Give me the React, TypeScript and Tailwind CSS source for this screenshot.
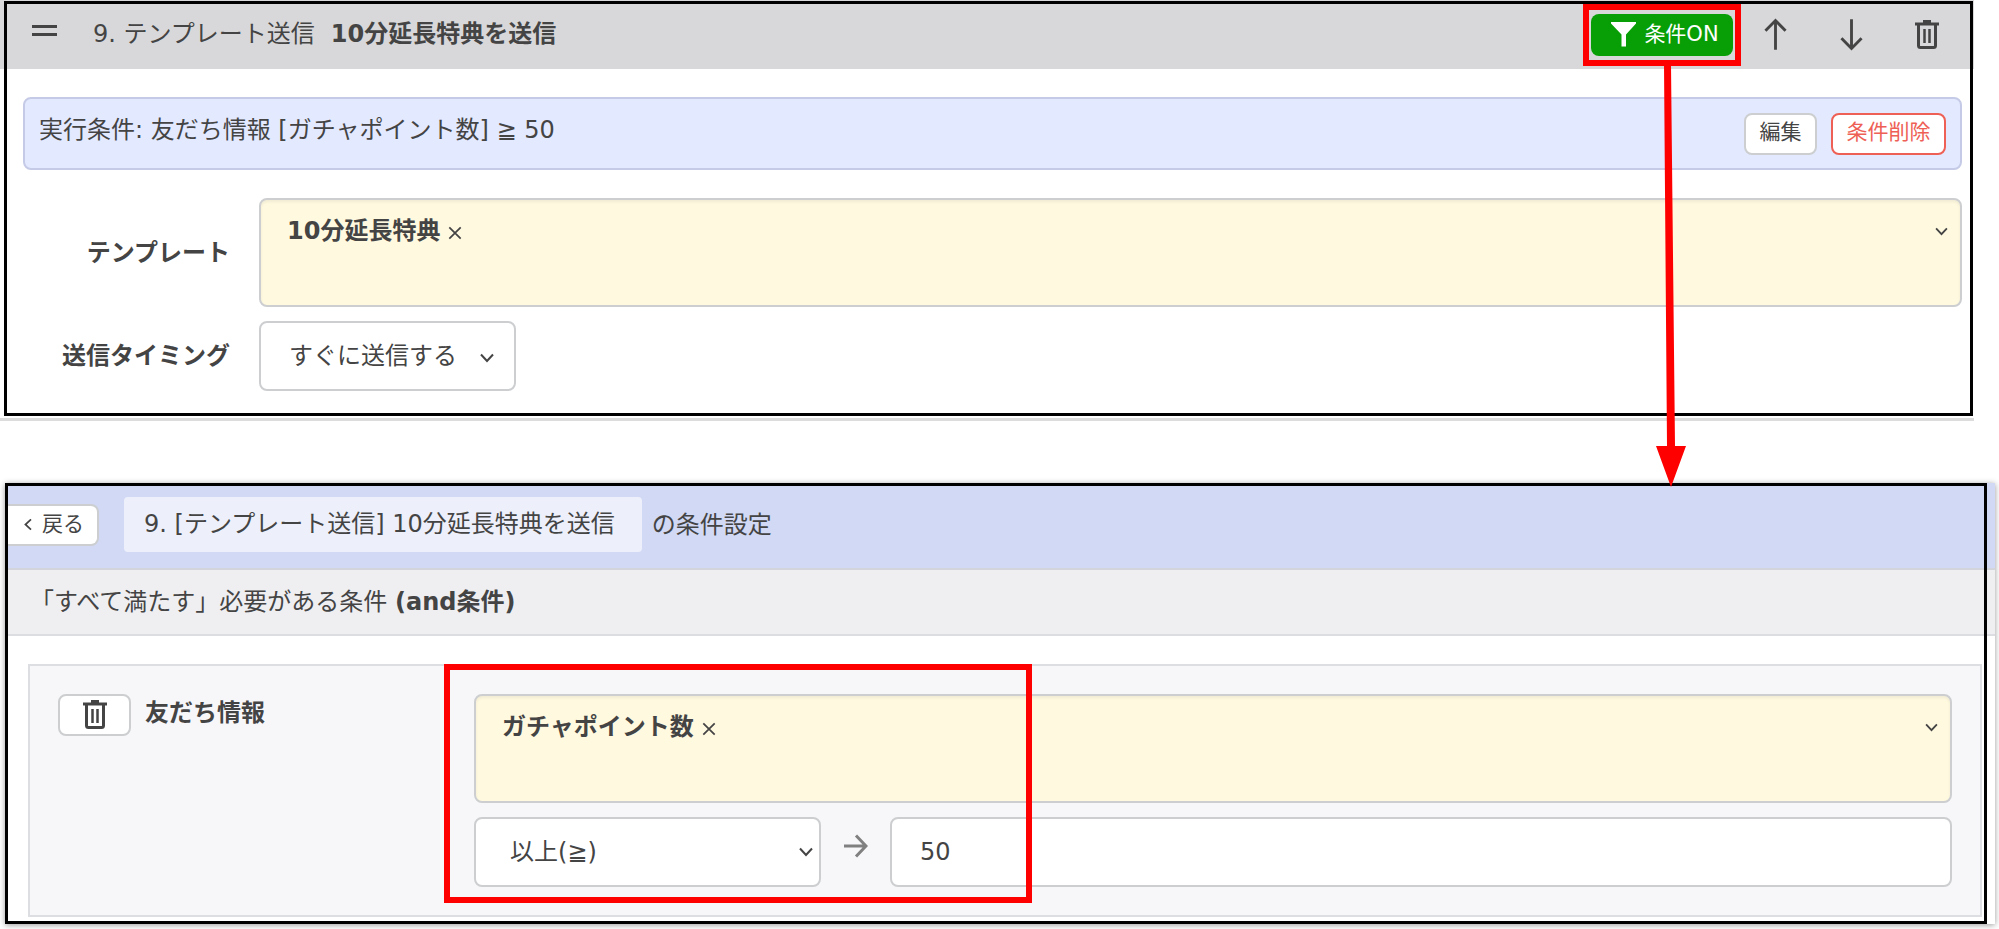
const ArrowIcon = ({ className }: { className?: string }) => (
  <svg viewBox="0 0 24 34" fill="none" stroke="currentColor" strokeWidth="3" className={className}>
    <path d="M12 33V3M1.500 13 12 2.500 22.500 13" />
  </svg>
)

const ArrowRightIcon = ({ className }: { className?: string }) => (
  <svg viewBox="0 0 24 24" fill="none" stroke="currentColor" strokeWidth="3" className={className}>
    <path d="M0 12h22M12 1.500 22 12 12 22.500" />
  </svg>
)

const TrashIcon = ({ className }: { className?: string }) => (
  <svg viewBox="0 0 24 30" fill="none" stroke="currentColor" className={className}>
    <path d="M0 4h24" strokeWidth="3" />
    <path d="M8 1.500h8" strokeWidth="3" />
    <path d="M3.500 5v20.500a2 2 0 0 0 2 2h13a2 2 0 0 0 2-2V5" strokeWidth="3" />
    <path d="M9.500 9v14M14.500 9v14" strokeWidth="2.500" />
  </svg>
)

const FilterIcon = ({ className }: { className?: string }) => (
  <svg viewBox="0 0 25 25" fill="currentColor" className={className}>
    <path d="M0 0h25v1.500L15 12.500v12h-4.500v-12L0 1.500Z" />
  </svg>
)

const ChevronIcon = ({ className }: { className?: string }) => (
  <svg viewBox="0 0 14 10" fill="none" stroke="currentColor" strokeWidth="2" className={className}>
    <path d="M1 1.500 7 8l6-6.500" />
  </svg>
)

// black outline drawn over a panel
const Frame = ({ className }: { className: string }) => (
  <div className={`pointer-events-none absolute border-3 border-black ${className}`} />
)

const TagSelect = ({ label, value }: { label: string; value: string }) => (
  <div
    role="group"
    aria-label={label}
    className="flex h-[109px] min-w-0 items-start justify-between rounded-lg border-2 border-[#ccced0] bg-[#fff9e0] pt-[19px] pr-3 pl-[26px] shadow-[inset_0_2px_3px_rgba(0,0,0,0.06)]"
  >
    <div className="flex items-center gap-2 leading-6">
      <strong>{value}</strong>
      <button type="button" aria-label="解除" className="h-6 w-[14px]">
        <svg viewBox="0 0 16 16" stroke="currentColor" strokeWidth="2" className="mt-1 h-[14px] w-[14px]">
          <path d="m1.500 1.500 13 13M14.500 1.500l-13 13" />
        </svg>
      </button>
    </div>
    <button type="button" aria-label="開く" className="flex h-6 items-center">
      <ChevronIcon className="h-[9px] w-[13px]" />
    </button>
  </div>
)

const ActionPanel = () => (
  <section className="relative mr-[25px] border-b-3 border-[#dcdcdc]">
    <header className="flex h-[69px] items-center bg-[#d8d8da] pr-[9px] pl-8">
      <div className="mr-9 mb-2 flex w-[25px] flex-col gap-[5px]">
        <span className="h-[3px] bg-[#444]" />
        <span className="h-[3px] bg-[#444]" />
      </div>
      <h2 className="pb-[2px]">
        9. テンプレート送信<strong className="ml-4">10分延長特典を送信</strong>
      </h2>
      <div className="relative mr-1 ml-auto">
        <button
          type="button"
          className="flex h-[42px] w-[142px] items-center justify-center gap-2 rounded-lg bg-[#089e06] pl-[6px] text-[21px] text-white"
        >
          <FilterIcon className="h-[25px] w-[25px]" />
          <span className="pb-[2px]">条件ON</span>
        </button>
        <div className="pointer-events-none absolute -inset-x-2 -inset-y-[10px] border-6 border-[#f00]" />
        <svg viewBox="0 0 30 422" className="pointer-events-none absolute top-full left-[65px] z-10 mt-[9px] h-[422px] w-[30px]">
          <path d="M8 0h7l4 381h11L15 422 0 381h11Z" fill="#f00" />
        </svg>
      </div>
      <button type="button" aria-label="上へ" className="flex w-[76px] justify-center">
        <ArrowIcon className="h-[33px] w-[23px]" />
      </button>
      <button type="button" aria-label="下へ" className="flex w-[76px] justify-center">
        <ArrowIcon className="h-[33px] w-[23px] rotate-180" />
      </button>
      <button type="button" aria-label="削除" className="flex w-[76px] justify-center">
        <TrashIcon className="h-[30px] w-6" />
      </button>
    </header>

    <div className="pt-7 pr-3 pb-[27px] pl-[23px]">
      <div className="flex h-[73px] items-start gap-[14px] rounded-lg border-2 border-[#c5cbe6] bg-[#e3e9ff] px-[14px] pt-[14px]">
        <p className="mr-auto pt-[2px]">実行条件: 友だち情報 [ガチャポイント数] ≧ 50</p>
        <button
          type="button"
          className="h-[42px] w-[73px] rounded-lg border-2 border-[#ccced0] bg-white pb-1 text-[21px] leading-6"
        >
          編集
        </button>
        <button
          type="button"
          className="h-[42px] w-[115px] rounded-lg border-2 border-[#ee6055] bg-white pb-1 text-[21px] leading-6 text-[#ee6055]"
        >
          条件削除
        </button>
      </div>
      <div className="mt-7 grid grid-cols-[207px_1fr] items-center gap-x-[29px] gap-y-[14px]">
        <span className="text-right font-bold">テンプレート</span>
        <TagSelect label="テンプレート" value="10分延長特典" />
        <label htmlFor="timing" className="text-right font-bold">
          送信タイミング
        </label>
        <div className="relative w-[257px]">
          <select
            id="timing"
            className="h-[70px] w-full appearance-none rounded-lg border-2 border-[#ccced0] bg-white pl-7"
          >
            <option>すぐに送信する</option>
          </select>
          <ChevronIcon className="pointer-events-none absolute top-8 right-[22px] h-[10px] w-[14px]" />
        </div>
      </div>
    </div>
    <Frame className="top-[1px] right-[1px] bottom-[2px] left-[4px]" />
  </section>
)

const ConditionPanel = () => (
  <section className="relative mt-[62px] mr-1 ml-[5px] bg-white shadow-[0_1px_6px_rgba(0,0,0,0.4)]">
    <header className="flex h-[87px] items-start border-b-2 border-[#d3d5dc] bg-[#d1d9f5] pt-[14px]">
      <button
        type="button"
        className="mt-[7px] flex h-[42px] w-[94px] items-center gap-2 rounded-r-lg border-2 border-l-0 border-[#ccced0] bg-white pb-[2px] pl-[17px] text-[21px]"
      >
        <ChevronIcon className="h-[9px] w-[12px] rotate-90" />
        戻る
      </button>
      <h2 className="flex items-center gap-[10px] pl-[25px]">
        <span className="rounded bg-[#edf0fa] pt-3 pr-[27px] pb-[13px] pl-5 leading-[30px]">
          9. [テンプレート送信] 10分延長特典を送信
        </span>
        の条件設定
      </h2>
    </header>
    <p className="flex h-[66px] items-center border-b-2 border-[#dcdde0] bg-[#efeff2] pl-[25px]">
      <span>
        「すべて満たす」必要がある条件 <strong>(and条件)</strong>
      </span>
    </p>
    <div className="pt-7 pr-[13px] pb-[7px] pl-[23px]">
      <div className="flex items-start border-2 border-[#dddee2] bg-[#f7f7fa] p-7">
        <div className="flex w-[416px] shrink-0 gap-[14px]">
          <button
            type="button"
            aria-label="条件を削除"
            className="flex h-[42px] w-[73px] items-center justify-center rounded-lg border-2 border-[#ccced0] bg-white"
          >
            <TrashIcon className="h-[30px] w-6" />
          </button>
          <h3 className="leading-[38px] font-bold">友だち情報</h3>
        </div>
        <div className="relative flex min-w-0 flex-1 flex-col gap-[14px]">
          <TagSelect label="友だち情報" value="ガチャポイント数" />
          <div className="flex items-center">
            <div className="relative w-[347px] shrink-0">
              <select
                aria-label="比較条件"
                className="h-[70px] w-full appearance-none rounded-lg border-2 border-[#ccced0] bg-white pl-[34px]"
              >
                <option>以上(≧)</option>
              </select>
              <ChevronIcon className="pointer-events-none absolute top-[30px] right-2 h-[10px] w-[14px]" />
            </div>
            <div className="flex w-[69px] shrink-0 justify-center pb-3 text-[#808080]">
              <ArrowRightIcon className="h-6 w-6" />
            </div>
            <input
              type="text"
              aria-label="値"
              defaultValue="50"
              className="h-[70px] min-w-0 flex-1 rounded-lg border-2 border-[#ccced0] bg-white px-7"
            />
          </div>
          <div className="pointer-events-none absolute -top-[30px] -bottom-4 -left-[30px] w-[588px] border-6 border-[#f00]" />
        </div>
      </div>
    </div>
    <Frame className="top-0 right-2 bottom-0 left-0" />
  </section>
)

export default function App() {
  return (
    <main className="bg-white pb-[5px] font-['DejaVu_Sans','Noto_Sans_CJK_JP',sans-serif] text-[24px] leading-[30px] text-[#444]">
      <ActionPanel />
      <ConditionPanel />
    </main>
  )
}
